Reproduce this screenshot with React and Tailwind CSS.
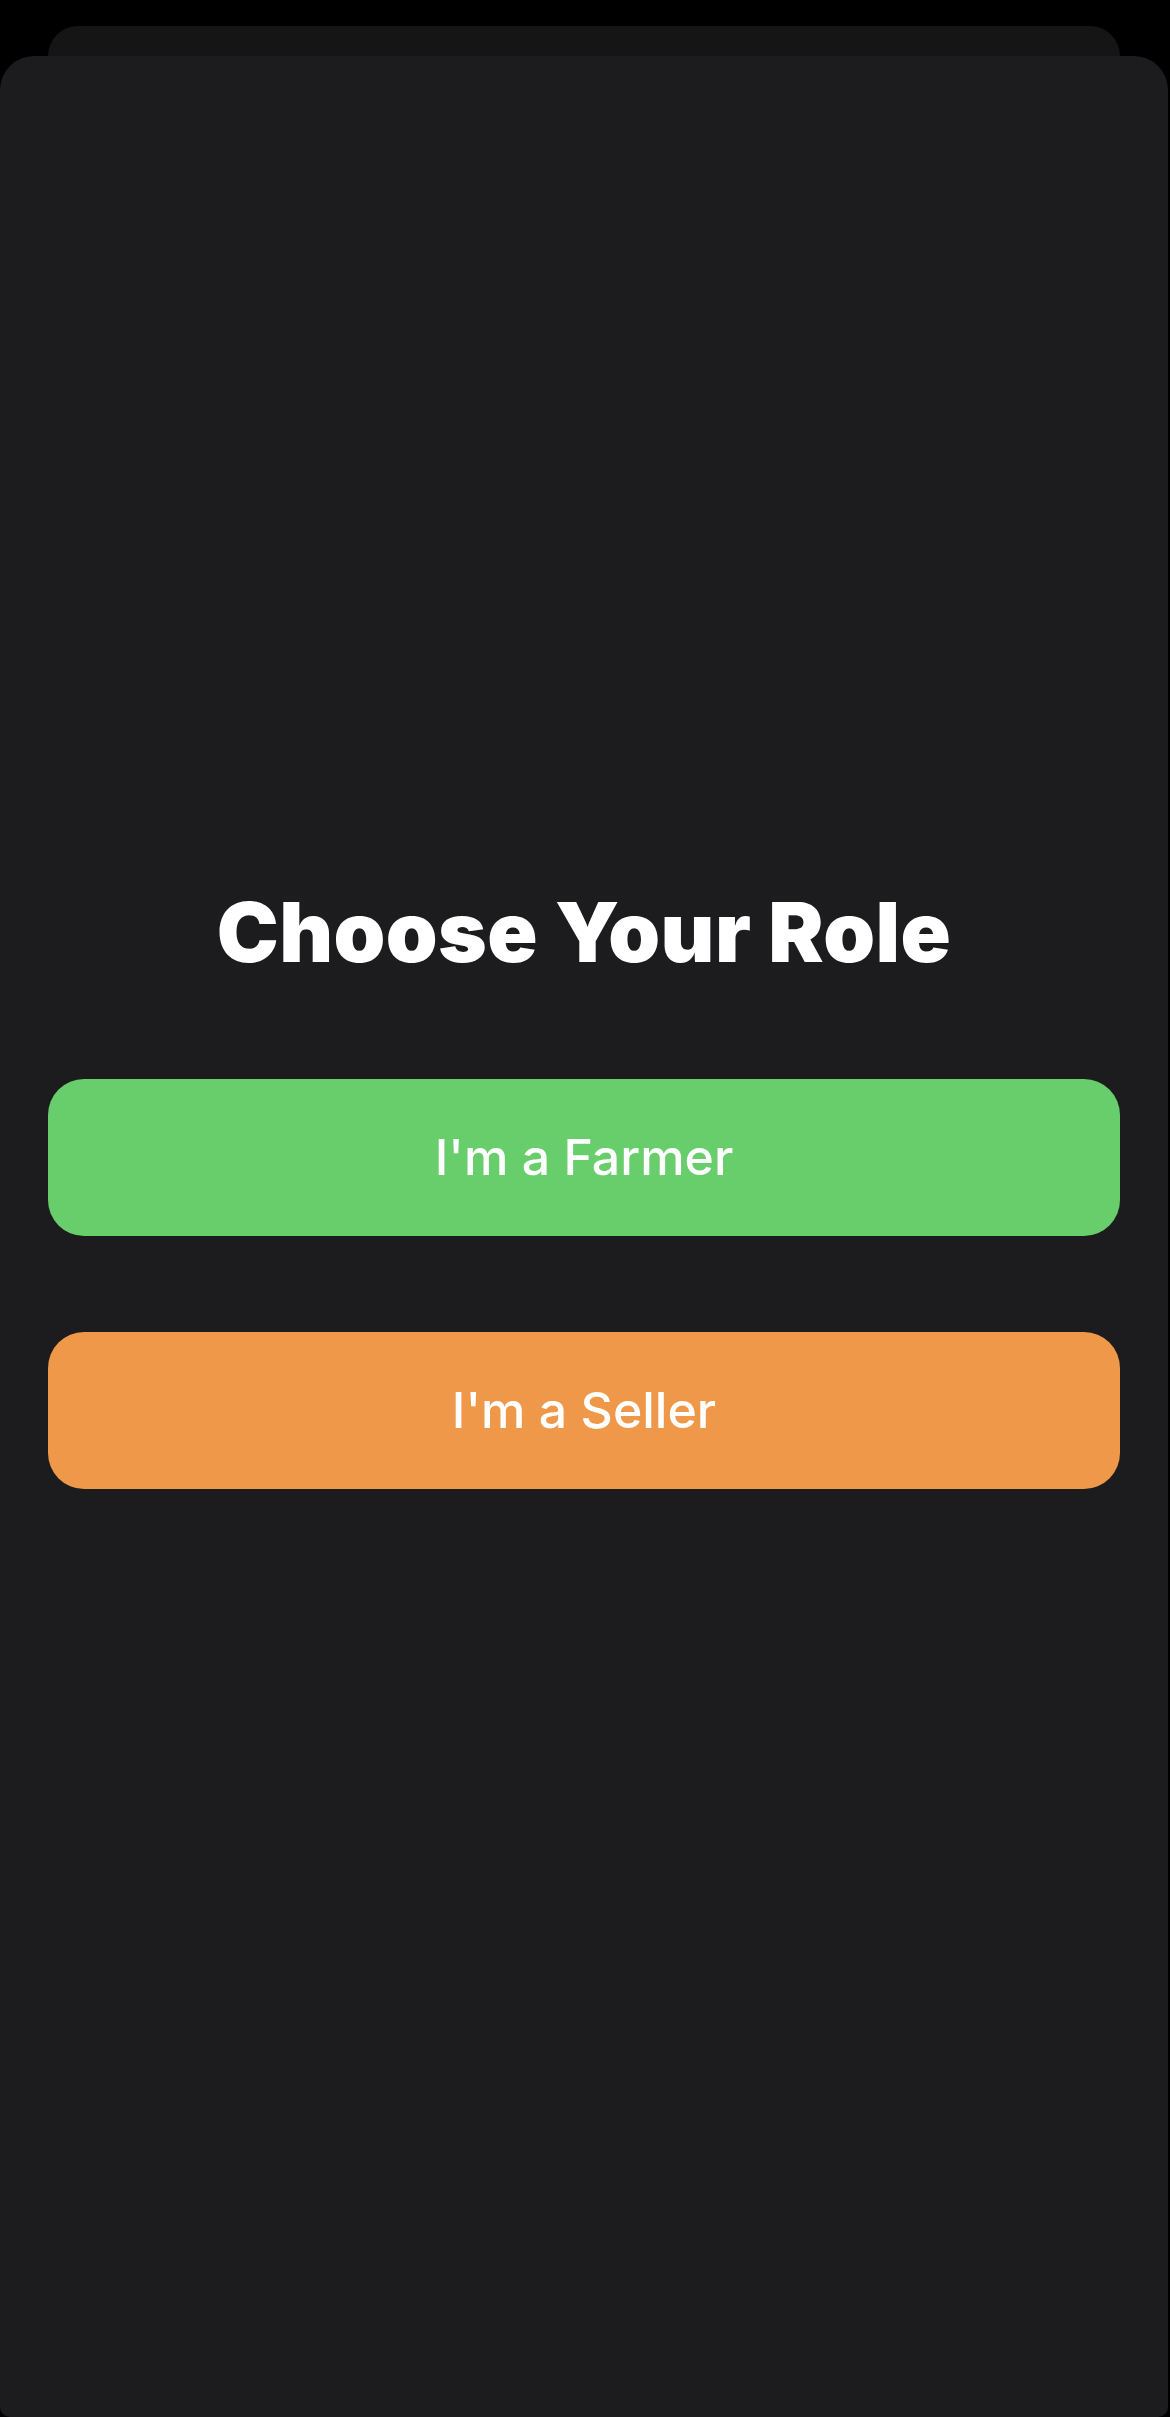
function RoleButton({ label, color }) {
  return (
    <button
      type="button"
      className={`flex h-[157px] w-full items-center justify-center rounded-[36px] text-[50px] font-medium text-white ${color}`}
    >
      {label}
    </button>
  );
}

export default function App() {
  return (
    <div className="flex h-[2417px] w-[1170px] flex-col bg-black pt-[26px] font-['Inter',sans-serif]">
      <div className="ml-[48px] mr-[50px] h-[30px] shrink-0 rounded-t-[30px] bg-[#151515]" />
      <div className="mr-[2px] flex flex-1 flex-col items-center rounded-t-[34px] rounded-b-[10px] bg-[#1c1c1e] px-[48px] pt-[835px]">
        <h1 className="text-[83px] leading-none font-black tracking-[0.005em] text-white">
          Choose Your Role
        </h1>
        <div className="mt-[105px] flex w-full flex-col gap-[96px]">
          <RoleButton label="I'm a Farmer" color="bg-[#68cd6b]" />
          <RoleButton label="I'm a Seller" color="bg-[#f0984a]" />
        </div>
      </div>
    </div>
  );
}
